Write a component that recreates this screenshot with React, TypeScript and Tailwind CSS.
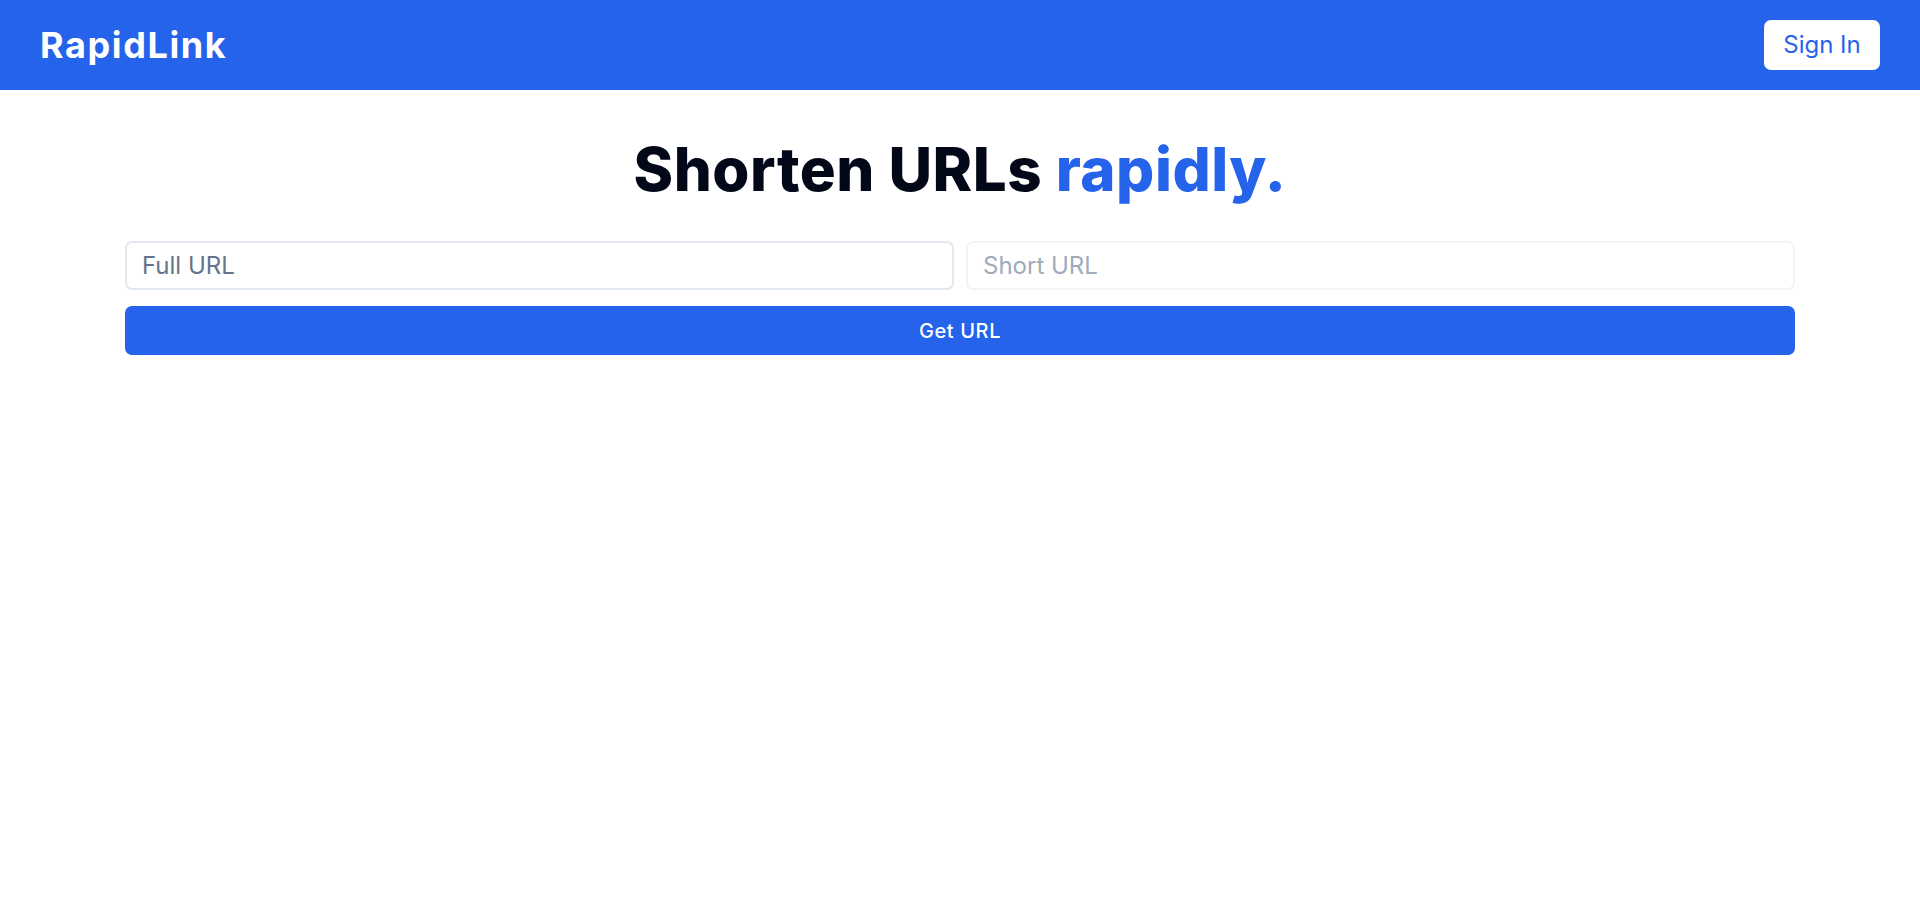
import React from "react";

export default function App() {
  const font = { fontFamily: "Inter, 'Noto Sans', sans-serif" };
  return (
    <div className="min-h-screen bg-white" style={font}>
      <header className="flex h-[90px] items-center justify-between bg-[#2563eb] px-[40px]">
        <div className="text-[36px] font-bold tracking-[1.6px] text-white">RapidLink</div>
        <button className="flex h-[50px] w-[116px] items-center justify-center rounded-[7px] bg-white text-[24px] text-[#2563eb]">
          Sign In
        </button>
      </header>
      <main className="px-[125px]">
        <h1 className="mt-[49px] text-center text-[60px] leading-[60px] font-extrabold tracking-[0.5px] text-[#020817]">
          Shorten URLs <span className="text-[#2563eb]">rapidly.</span>
        </h1>
        <div className="mt-[42px] flex gap-[12px]">
          <input
            className="h-[49px] flex-1 rounded-[7px] border-2 border-[#e2e8f0] pl-[15px] text-[24px] text-slate-600 outline-none placeholder:text-[#64748b]"
            placeholder="Full URL"
          />
          <input
            className="h-[49px] flex-1 rounded-[7px] border-2 border-[#f1f5f9] pl-[15px] text-[24px] text-slate-600 outline-none placeholder:text-[#a0abbb]"
            placeholder="Short URL"
            readOnly
          />
        </div>
        <button className="mt-[16px] flex h-[49px] w-full items-center justify-center rounded-[7px] bg-[#2563eb] text-[20px] font-medium tracking-[0.6px] text-white">
          Get URL
        </button>
      </main>
    </div>
  );
}
